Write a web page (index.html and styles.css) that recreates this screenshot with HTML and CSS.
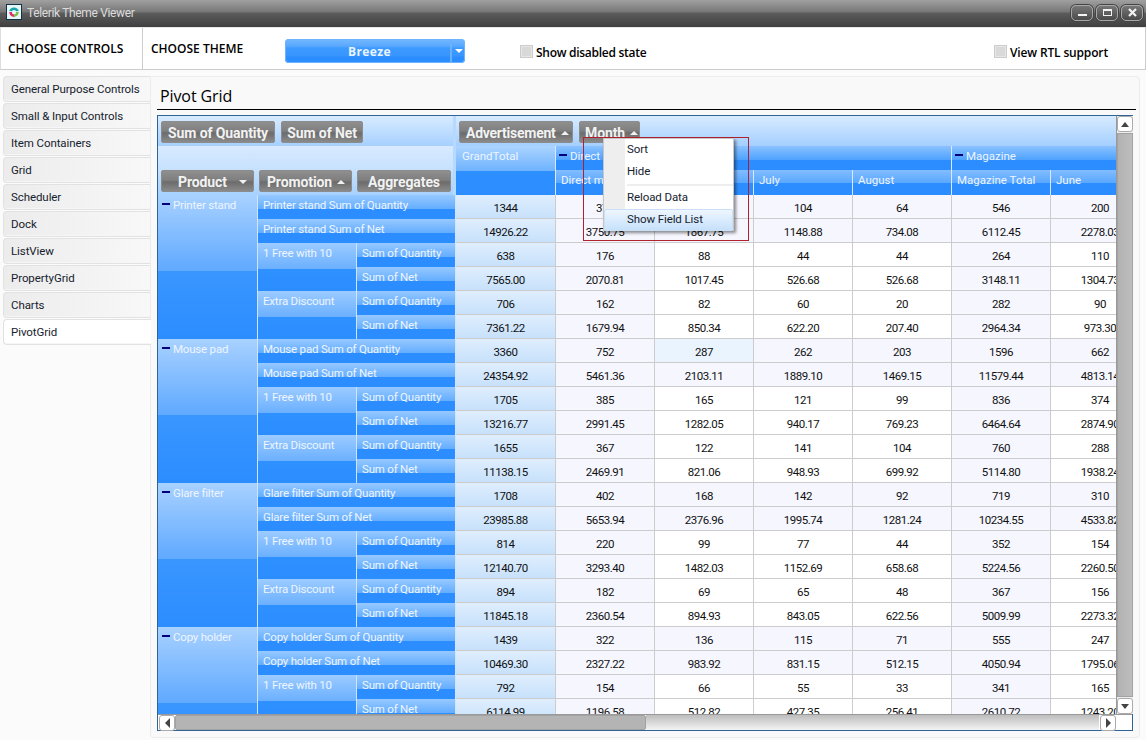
FILE: index.html
```html
<!DOCTYPE html>
<html lang="en">
<head>
<meta charset="utf-8">
<title>Telerik Theme Viewer</title>
<link rel="stylesheet" href="styles.css">
</head>
<body>
<div class="app">
  <header class="titlebar">
    <svg class="appicon" width="16" height="16" viewBox="0 0 16 16"><rect x=".5" y=".5" width="15" height="15" fill="#e9f6f8" stroke="#12324a"/><path d="M3.2 7A5 5 0 0 1 12.8 7L10 7.2A2.2 2.2 0 0 0 6 7.2Z" fill="#16a5a8"/><path d="M3.2 8A5 5 0 0 0 8 13L8 10.4A2.4 2.4 0 0 1 5.8 8Z" fill="#df2a6c"/><path d="M12.8 8A5 5 0 0 1 8 13L8 10.4A2.4 2.4 0 0 0 10.2 8Z" fill="#7cc242"/></svg>
    <span class="apptitle">Telerik Theme Viewer</span>
    <div class="winbtns">
      <span class="winbtn"><svg width="11" height="9" viewBox="0 0 11 9"><rect x="1" y="6" width="9" height="2" fill="#f2f2f2"/></svg></span>
      <span class="winbtn"><svg width="11" height="9" viewBox="0 0 11 9"><rect x="1.5" y="1.5" width="8" height="6" fill="none" stroke="#f2f2f2"/><rect x="1" y="1" width="9" height="2" fill="#f2f2f2"/></svg></span>
      <span class="winbtn"><svg width="11" height="9" viewBox="0 0 11 9"><path d="M2 1L9 8M9 1L2 8" stroke="#f2f2f2" stroke-width="2.2"/></svg></span>
    </div>
  </header>
  <div class="toolbar">
    <div class="tool-left">CHOOSE CONTROLS</div>
    <div class="tool-theme">CHOOSE THEME</div>
    <div class="dropdown"><span class="dropdown-val">Breeze</span><span class="dropdown-arrow"><i class="tri-down"></i></span></div>
    <label class="check check-a"><i class="box"></i>Show disabled state</label>
    <label class="check check-b"><i class="box"></i>View RTL support</label>
  </div>
  <div class="content">
    <nav class="sidebar">
      <a class="navitem">General Purpose Controls</a>
      <a class="navitem">Small &amp; Input Controls</a>
      <a class="navitem">Item Containers</a>
      <a class="navitem">Grid</a>
      <a class="navitem">Scheduler</a>
      <a class="navitem">Dock</a>
      <a class="navitem">ListView</a>
      <a class="navitem">PropertyGrid</a>
      <a class="navitem">Charts</a>
      <a class="navitem active">PivotGrid</a>
    </nav>
    <main class="panel">
      <h1 class="panel-title">Pivot Grid</h1>
      <div class="pivot">
        <div class="pivot-main">
          <div class="viewport">
            <div class="band">
              <div class="band-left">
                <span class="fbtn w-qty">Sum of Quantity</span>
                <span class="fbtn w-net">Sum of Net</span>
              </div>
              <div class="band-right">
                <span class="fbtn w-adv">Advertisement<i class="tri-up"></i></span>
                <span class="fbtn w-month">Month<i class="tri-up"></i></span>
              </div>
            </div>
            <div class="headrow">
              <div class="headleft">
                <span class="fbtn w-prod w-product">Product<i class="tri-down tri-far"></i></span>
                <span class="fbtn w-prod">Promotion<i class="tri-up"></i></span>
                <span class="fbtn w-agg">Aggregates</span>
              </div>
              <div class="colheads">
                <div class="ch ch-grand">GrandTotal</div>
                <div class="ch ch-l1 ch-direct"><i class="minus"></i>Direct mail</div>
                <div class="ch ch-l1 ch-mag"><i class="minus"></i>Magazine</div>
                <div class="ch ch-l2">Direct mail Total</div>
                <div class="ch ch-l2">June</div>
                <div class="ch ch-l2">July</div>
                <div class="ch ch-l2">August</div>
                <div class="ch ch-l2">Magazine Total</div>
                <div class="ch ch-l2">June</div>
              </div>
            </div>
            <div class="bodyrow">
              <div class="rowheads">
                <div class="rh rh-group"><i class="minus"></i>Printer stand</div>
                <div class="rh rh-wide">Printer stand Sum of Quantity</div>
                <div class="rh rh-wide">Printer stand Sum of Net</div>
                <div class="rh rh-promo">1 Free with 10</div>
                <div class="rh">Sum of Quantity</div>
                <div class="rh">Sum of Net</div>
                <div class="rh rh-promo">Extra Discount</div>
                <div class="rh">Sum of Quantity</div>
                <div class="rh">Sum of Net</div>

                <div class="rh rh-group"><i class="minus"></i>Mouse pad</div>
                <div class="rh rh-wide">Mouse pad Sum of Quantity</div>
                <div class="rh rh-wide">Mouse pad Sum of Net</div>
                <div class="rh rh-promo">1 Free with 10</div>
                <div class="rh">Sum of Quantity</div>
                <div class="rh">Sum of Net</div>
                <div class="rh rh-promo">Extra Discount</div>
                <div class="rh">Sum of Quantity</div>
                <div class="rh">Sum of Net</div>

                <div class="rh rh-group"><i class="minus"></i>Glare filter</div>
                <div class="rh rh-wide">Glare filter Sum of Quantity</div>
                <div class="rh rh-wide">Glare filter Sum of Net</div>
                <div class="rh rh-promo">1 Free with 10</div>
                <div class="rh">Sum of Quantity</div>
                <div class="rh">Sum of Net</div>
                <div class="rh rh-promo">Extra Discount</div>
                <div class="rh">Sum of Quantity</div>
                <div class="rh">Sum of Net</div>

                <div class="rh rh-group"><i class="minus"></i>Copy holder</div>
                <div class="rh rh-wide">Copy holder Sum of Quantity</div>
                <div class="rh rh-wide">Copy holder Sum of Net</div>
                <div class="rh rh-promo">1 Free with 10</div>
                <div class="rh">Sum of Quantity</div>
                <div class="rh">Sum of Net</div>
              </div>
              <div class="cells">
                <div class="c gt">1344</div><div class="c lav">379</div><div class="c lav">164</div><div class="c lav">104</div><div class="c lav">64</div><div class="c lav">546</div><div class="c lav">200</div>
                <div class="c gt">14926.22</div><div class="c lav">3750.75</div><div class="c lav">1867.75</div><div class="c lav">1148.88</div><div class="c lav">734.08</div><div class="c lav">6112.45</div><div class="c lav">2278.03</div>
                <div class="c gt">638</div><div class="c lav">176</div><div class="c">88</div><div class="c">44</div><div class="c">44</div><div class="c lav">264</div><div class="c">110</div>
                <div class="c gt">7565.00</div><div class="c lav">2070.81</div><div class="c">1017.45</div><div class="c">526.68</div><div class="c">526.68</div><div class="c lav">3148.11</div><div class="c">1304.73</div>
                <div class="c gt">706</div><div class="c lav">162</div><div class="c">82</div><div class="c">60</div><div class="c">20</div><div class="c lav">282</div><div class="c">90</div>
                <div class="c gt">7361.22</div><div class="c lav">1679.94</div><div class="c">850.34</div><div class="c">622.20</div><div class="c">207.40</div><div class="c lav">2964.34</div><div class="c">973.30</div>

                <div class="c gt">3360</div><div class="c lav">752</div><div class="c hov">287</div><div class="c lav">262</div><div class="c lav">203</div><div class="c lav">1596</div><div class="c lav">662</div>
                <div class="c gt">24354.92</div><div class="c lav">5461.36</div><div class="c lav">2103.11</div><div class="c lav">1889.10</div><div class="c lav">1469.15</div><div class="c lav">11579.44</div><div class="c lav">4813.14</div>
                <div class="c gt">1705</div><div class="c lav">385</div><div class="c">165</div><div class="c">121</div><div class="c">99</div><div class="c lav">836</div><div class="c">374</div>
                <div class="c gt">13216.77</div><div class="c lav">2991.45</div><div class="c">1282.05</div><div class="c">940.17</div><div class="c">769.23</div><div class="c lav">6464.64</div><div class="c">2874.90</div>
                <div class="c gt">1655</div><div class="c lav">367</div><div class="c">122</div><div class="c">141</div><div class="c">104</div><div class="c lav">760</div><div class="c">288</div>
                <div class="c gt">11138.15</div><div class="c lav">2469.91</div><div class="c">821.06</div><div class="c">948.93</div><div class="c">699.92</div><div class="c lav">5114.80</div><div class="c">1938.24</div>

                <div class="c gt">1708</div><div class="c lav">402</div><div class="c lav">168</div><div class="c lav">142</div><div class="c lav">92</div><div class="c lav">719</div><div class="c lav">310</div>
                <div class="c gt">23985.88</div><div class="c lav">5653.94</div><div class="c lav">2376.96</div><div class="c lav">1995.74</div><div class="c lav">1281.24</div><div class="c lav">10234.55</div><div class="c lav">4533.82</div>
                <div class="c gt">814</div><div class="c lav">220</div><div class="c">99</div><div class="c">77</div><div class="c">44</div><div class="c lav">352</div><div class="c">154</div>
                <div class="c gt">12140.70</div><div class="c lav">3293.40</div><div class="c">1482.03</div><div class="c">1152.69</div><div class="c">658.68</div><div class="c lav">5224.56</div><div class="c">2260.50</div>
                <div class="c gt">894</div><div class="c lav">182</div><div class="c">69</div><div class="c">65</div><div class="c">48</div><div class="c lav">367</div><div class="c">156</div>
                <div class="c gt">11845.18</div><div class="c lav">2360.54</div><div class="c">894.93</div><div class="c">843.05</div><div class="c">622.56</div><div class="c lav">5009.99</div><div class="c">2273.32</div>

                <div class="c gt">1439</div><div class="c lav">322</div><div class="c lav">136</div><div class="c lav">115</div><div class="c lav">71</div><div class="c lav">555</div><div class="c">247</div>
                <div class="c gt">10469.30</div><div class="c lav">2327.22</div><div class="c lav">983.92</div><div class="c lav">831.15</div><div class="c lav">512.15</div><div class="c lav">4050.94</div><div class="c">1795.06</div>
                <div class="c gt">792</div><div class="c lav">154</div><div class="c">66</div><div class="c">55</div><div class="c">33</div><div class="c lav">341</div><div class="c">165</div>
                <div class="c gt">6114.99</div><div class="c lav">1196.58</div><div class="c">512.82</div><div class="c">427.35</div><div class="c">256.41</div><div class="c lav">2610.72</div><div class="c">1243.20</div>
              </div>
            </div>
          </div>
          <div class="vscroll">
            <span class="sbtn"><i class="tri-up dark"></i></span>
            <span class="vthumb"></span>
            <span class="sbtn"><i class="tri-down dark"></i></span>
          </div>
        </div>
        <div class="hscroll">
          <span class="sbtn sbtn-h"><i class="tri-left"></i></span>
          <span class="hthumb"></span>
          <span class="htrack"></span>
          <span class="sbtn sbtn-h"><i class="tri-right"></i></span>
          <span class="hcorner"></span>
        </div>
        <div class="focusrect"></div>
        <div class="menu">
          <div class="mi">Sort</div>
          <div class="mi">Hide</div>
          <div class="msep"></div>
          <div class="mi mi-reload">Reload Data</div>
          <div class="mi mi-hot">Show Field List</div>
        </div>
      </div>
    </main>
  </div>
</div>
</body>
</html>
```
FILE: styles.css
```css
* { box-sizing: border-box; }
html, body { margin: 0; padding: 0; }
body { width: 1146px; height: 740px; overflow: hidden; background: #fbfbfb; font: 11.5px Roboto, "Liberation Sans", sans-serif; color: #111; }
i { display: inline-block; font-style: normal; }
.app { display: flex; flex-direction: column; height: 740px; }

.titlebar { height: 27px; flex: none; display: flex; align-items: center; padding: 0 3px 0 6px;
  background: linear-gradient(#a0a0a0 0, #767676 12px, #5c5c5c 13px, #3f3f3f 27px); }
.appicon { flex: none; margin-top: -3px; }
.apptitle { margin-left: 5px; margin-top: -1px; color: #dcdcdc; font: 12px Roboto, sans-serif; letter-spacing: -.35px; }
.winbtns { margin-left: auto; display: flex; gap: 3px; margin-top: -2px; }
.winbtn { width: 22px; height: 16px; display: flex; align-items: center; justify-content: center; border: 1px solid #a8a8a8; border-radius: 5px;
  background: linear-gradient(#777, #4a4a4a); box-shadow: 0 0 0 1px #444; }

.toolbar { height: 43px; flex: none; display: flex; align-items: center; background: #fff; border-bottom: 1px solid #ccc; border-right: 1px solid #ccc; border-left: 1px solid #ddd; border-top: 1px solid #e8e8e8; font: 600 12px "Open Sans", sans-serif; color: #000; }
.tool-left { width: 142px; height: 100%; display: flex; align-items: center; padding: 0 0 0 7px; border-right: 1px solid #ccc; }
.tool-theme { margin-left: 8px; width: 134px; }
.dropdown { width: 180px; height: 24px; margin-top: 5px; display: flex; border-radius: 4px; background: linear-gradient(#74b8ff 0, #5aa9ff 7px, #3d9bff 9px, #3895ff 17px, #2b8dff 18px, #2b8dff 100%); box-shadow: inset 0 0 0 1px #6cb4ff; color: #eaf4ff; font: 700 12px "Open Sans", sans-serif; letter-spacing: .4px; }
.dropdown-val { flex: 1; text-align: center; line-height: 26px; padding-left: 4px; }
.dropdown-arrow { width: 15px; display: flex; align-items: center; justify-content: center; border-left: 2px solid #69b0ff; }
.dropdown .tri-down { margin: 0; border-top-color: #fff; }
.check { display: flex; align-items: center; letter-spacing: -.28px; padding-top: 8px; }
.check-a { margin-left: 55px; }
.check-b { margin-left: auto; margin-right: 37px; letter-spacing: -.15px; }
.box { width: 13px; height: 13px; margin: -2px 3px 0 0; background: #d9d9d9; border: 1px solid #ccc; box-shadow: inset 0 0 0 1px #e6e6e6; }

.content { flex: 1; display: flex; padding: 6px 6px 2px 3px; min-height: 0; }
.sidebar { width: 147px; flex: none; display: flex; flex-direction: column; gap: 1px; }
.navitem { height: 26px; padding: 0 0 1px 7px; display: flex; align-items: center; font: 11.5px Roboto, sans-serif; letter-spacing: -.08px; color: #16222e; border: 1px solid #e2e2e2; border-right: 0; border-radius: 4px 0 0 4px; background: linear-gradient(90deg, #ececec, #f8f8f8); box-shadow: inset 0 -1px 0 #f6f6f6; }
.navitem.active { background: #fff; position: relative; z-index: 1; width: 148px; }

.panel { flex: 1; display: flex; flex-direction: column; background: #f9f9f9; border: 1px solid #ececec; border-radius: 0 4px 4px 4px; padding: 0 6px 6px 6px; min-width: 0; }
.panel-title { margin: 0; height: 33px; padding: 9px 0 0 3px; border-bottom: 1px solid #000; font: 400 16px/20px "Open Sans", sans-serif; color: #000; width: 979px; letter-spacing: -.1px; }

.pivot { position: relative; width: 976px; height: 616px; margin-top: 5px; border: 1px solid #2f6596; display: flex; flex-direction: column; background: #fff; }
.pivot-main { flex: none; height: 598px; display: flex; }
.viewport { width: 958px; flex: none; overflow: hidden; display: flex; flex-direction: column; }
.band { flex: none; height: 30px; display: flex; }
.band-left { width: 298px; flex: none; display: flex; gap: 6px; padding: 5px 0 0 3px; background: linear-gradient(#d8ebff, #a6d0ff); border-right: 3px solid #b5d9ff; }
.band-right { flex: 1; display: flex; gap: 6px; padding: 5px 0 0 3px; background: linear-gradient(#d8ebff, #a4cfff); }

.fbtn { height: 22px; padding-top: 1px; display: flex; align-items: center; justify-content: center; font: 700 14px Roboto, sans-serif; letter-spacing: -.1px; color: #f2f2f2; border: 1px solid #8c8c8c; border-radius: 2px; background: linear-gradient(#8f8f8f 0, #7f7f7f 45%, #6c6c6c 55%, #8a8a8a 100%); white-space: nowrap; }
.w-qty { width: 114px; }
.w-net { width: 82px; }
.w-adv { width: 114px; justify-content: flex-start; padding-left: 6px; letter-spacing: -.25px; }
.w-month { width: 61px; justify-content: flex-start; padding-left: 5px; }
.w-prod { width: 93px; padding-left: 1px; }
.w-product { justify-content: flex-start; padding-left: 16px; }
.w-agg { width: 94px; }
.tri-up, .tri-down { width: 0; height: 0; border-left: 4px solid transparent; border-right: 4px solid transparent; margin-left: 5px; }
.tri-far { margin-left: 12px; }
.tri-up { border-bottom: 4px solid #f2f2f2; }
.tri-down { border-top: 4px solid #f2f2f2; }
.tri-up.dark { border-bottom: 5px solid #444; margin: 0; }
.tri-down.dark { border-top: 5px solid #444; margin: 0; }
.tri-left { width: 0; height: 0; border-top: 5px solid transparent; border-bottom: 5px solid transparent; border-right: 5px solid #444; }
.tri-right { width: 0; height: 0; border-top: 5px solid transparent; border-bottom: 5px solid transparent; border-left: 5px solid #444; }

.headrow { flex: none; height: 49px; display: flex; }
.headleft { width: 298px; flex: none; display: flex; gap: 5px; align-items: flex-start; padding: 24px 0 0 3px; background: linear-gradient(#d8eaff, #c6e1fd 50%, #a6d1ff); border-right: 3px solid #b5d9ff; }
.colheads { display: grid; grid-template-columns: 100px repeat(6, 99px); grid-template-rows: 24px 25px; flex: none; color: #eef5ff; }
.ch { padding: 3px 0 0 5px; line-height: 15px; white-space: nowrap; overflow: hidden; border-right: 1px solid #d6e9ff; }
.ch-grand { grid-row: span 2; padding-left: 6px; background: linear-gradient(#acd4ff 0, #6fb3ff 50%, #2e90ff 50%, #2b8dff 100%); }
.ch-l1 { padding-left: 2px; background: linear-gradient(#8bc2ff 0, #4ea2ff 58%, #2b8dff 58%); }
.ch-direct { grid-column: span 4; }
.ch-mag { grid-column: span 2; }
.ch-l2 { background: linear-gradient(#82bcff 0, #5aa8ff 52%, #2b8dff 52%); }

.bodyrow { flex: none; display: flex; align-items: flex-start; }
.rowheads { width: 298px; flex: none; display: grid; grid-template-columns: 100px 99px 99px; grid-auto-rows: 24px; color: #eef5ff; letter-spacing: -.2px; }
.rh { padding: 3px 0 0 5px; line-height: 14px; white-space: nowrap; overflow: hidden; border-right: 1px solid #cfe5ff; background: linear-gradient(#96c9ff 0, #64adff 58%, #2b8dff 58%); }
.rh-wide { grid-column: span 2; }
.rh-group { grid-row: span 6; padding-left: 4px; background: linear-gradient(#a8d1ff 0, #5fa9ff 53%, #3a96ff 53%, #2b8dff 100%); }
.rh-promo { grid-row: span 2; background: linear-gradient(#9ccbff 0, #6bb0ff 54%, #2f91ff 54%, #2b8dff 100%); }
.cells { display: grid; grid-template-columns: 100px repeat(6, 99px); grid-auto-rows: 24px; flex: none; letter-spacing: -.5px; }
.c { display: flex; align-items: center; justify-content: center; padding-top: 3px; background: #fff; border-right: 1px solid #ccc; border-bottom: 1px solid #ccc; color: #111; }
.c.lav { background: #f5f6fe; }
.c.hov { background: #eaf4fe; }
.c.gt { background: linear-gradient(#dfeefe, #c7e1fb); }
.minus { width: 8px; height: 2px; background: #00007a; margin: 0 3px 3px 0; vertical-align: middle; }
.ch-l1 .minus { margin-left: 1px; }

.vscroll { width: 17px; flex: none; display: flex; flex-direction: column; background: #eee; border-left: 1px solid #999; }
.sbtn { height: 16px; flex: none; display: flex; align-items: center; justify-content: center; background: #fff; border: 1px solid #aaa; border-radius: 3px; }
.vthumb { flex: 1; margin: 1px 0; background: linear-gradient(90deg, #b2b2b2, #bdbdbd); border: 1px solid #a2a2a2; }
.hscroll { height: 16px; flex: none; display: flex; background: #fff; border-top: 1px solid #999; }
.sbtn-h { width: 16px; height: 16px; margin-left: 1px; }
.hthumb { width: 471px; flex: none; background: #b4b4b4; border: 1px solid #a2a2a2; border-radius: 2px; }
.htrack { width: 453px; flex: none; background: linear-gradient(#bdbdbd, #f4f4f4); }
.hcorner { flex: 1; background: #fff; }

.focusrect { position: absolute; left: 425px; top: 21px; width: 166px; height: 104px; border: 1px solid #b0202e; pointer-events: none; }
.menu { position: absolute; left: 445px; top: 22px; width: 131px; height: 93px; background: linear-gradient(90deg, #eeeeee 21px, #fff 21px); border: 1px solid #c6c6c6; box-shadow: 2px 2px 3px rgba(0,0,0,.45); padding-left: 23px; color: #16222e; letter-spacing: -.1px; }
.mi { height: 22px; line-height: 21px; }
.msep { height: 2px; margin: 1px 0; background: #eee; }
.mi-hot { margin-left: -23px; padding-left: 22px; background: linear-gradient(#eef6ff, #c6e1fb); border: 1px solid #c8dff5; border-radius: 2px; line-height: 19px; }
```
